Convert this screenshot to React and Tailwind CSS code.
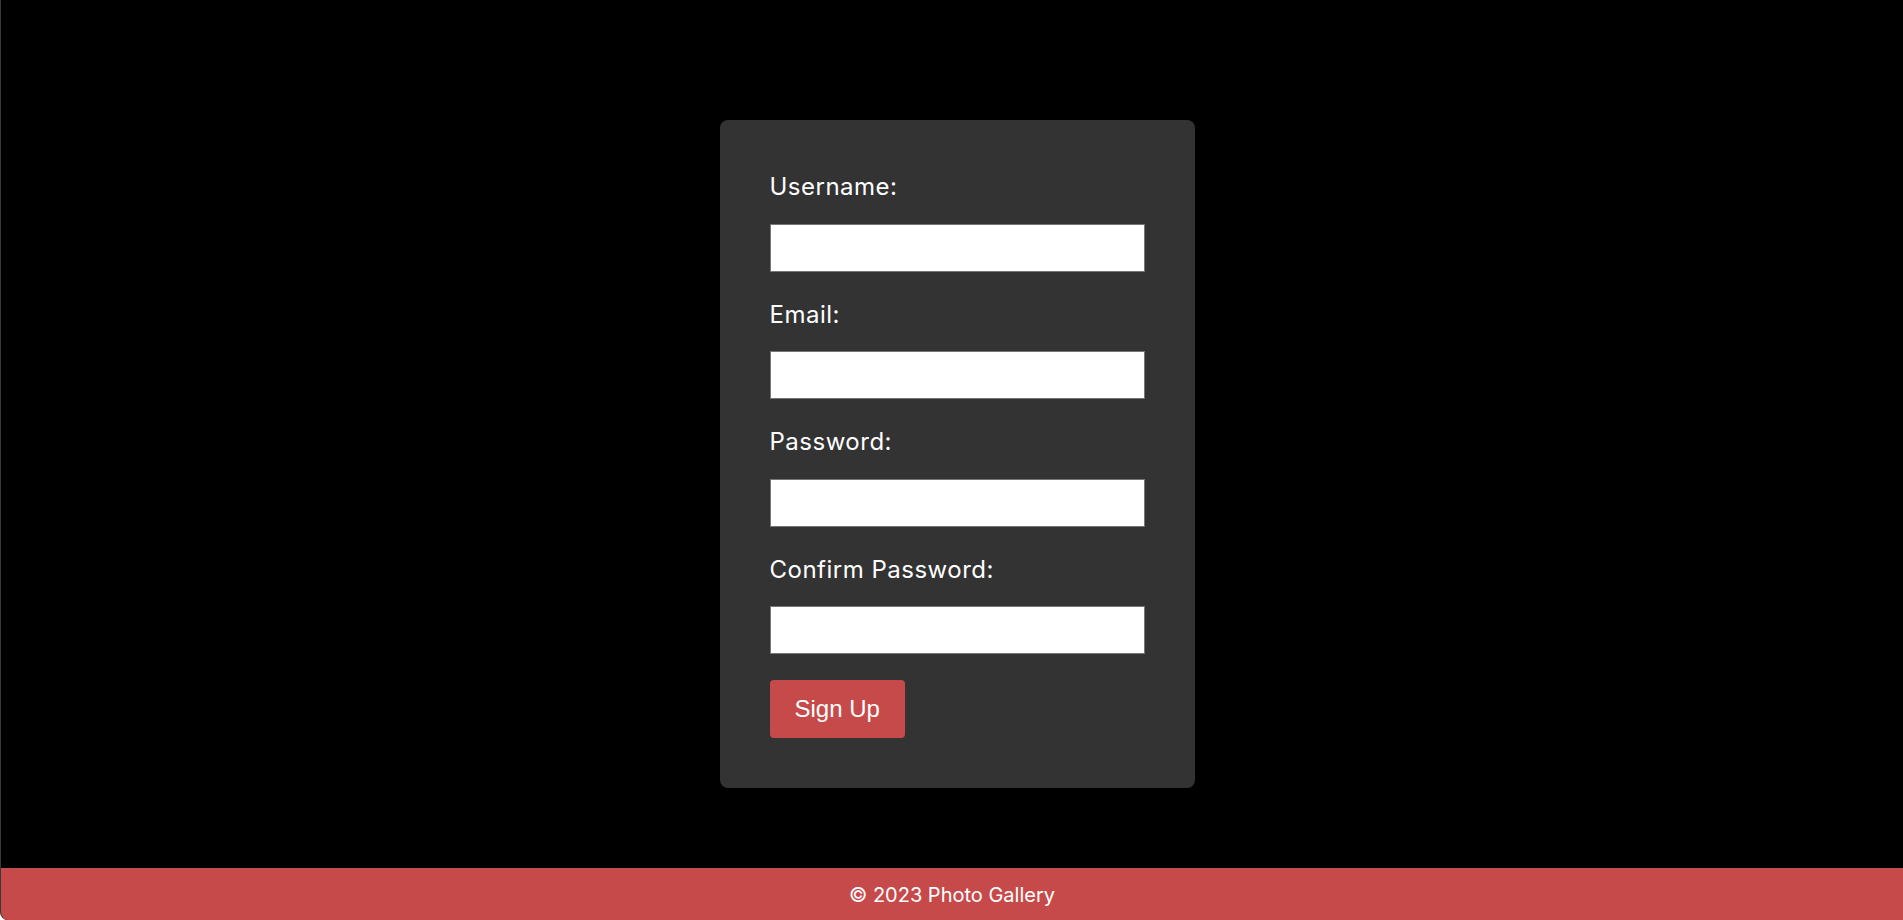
import React from "react";

const fields = [
  { id: "username", label: "Username:", type: "text" },
  { id: "email", label: "Email:", type: "email" },
  { id: "password", label: "Password:", type: "password" },
  { id: "confirm", label: "Confirm Password:", type: "password" },
];

export default function App() {
  return (
    <div className="flex h-screen flex-col bg-black border-l border-[#3a3a3a] rounded-bl-[8px] overflow-hidden font-['Inter',sans-serif] text-white">
      {/* Sign up card */}
      <main className="flex flex-1 justify-center pt-[120px] pl-[10px]">
        <form
          className="flex h-fit w-[475px] flex-col rounded-[8px] bg-[#333333] p-[50px]"
          onSubmit={(e) => e.preventDefault()}
        >
          {fields.map((f) => (
            <div key={f.id} className="flex flex-col">
              <label
                htmlFor={f.id}
                className="mb-[20px] text-[24px] leading-[33.6px] tracking-[0.5px]"
              >
                {f.label}
              </label>
              <input
                id={f.id}
                type={f.type}
                className="mb-[26px] h-[48px] w-[375px] border border-[#767676] bg-white px-2 text-black outline-none"
              />
            </div>
          ))}
          <div>
            <button
              type="submit"
              className="h-[58px] rounded-[4px] bg-[#c74a4b] px-[25px] font-['Liberation_Sans',Arial,sans-serif] text-[24px] text-white"
            >
              Sign Up
            </button>
          </div>
        </form>
      </main>

      {/* Footer */}
      <footer className="flex h-[52px] shrink-0 items-center justify-center bg-[#c74a4b] pt-[2px] text-[20px] text-white">
        © 2023 Photo Gallery
      </footer>
    </div>
  );
}
